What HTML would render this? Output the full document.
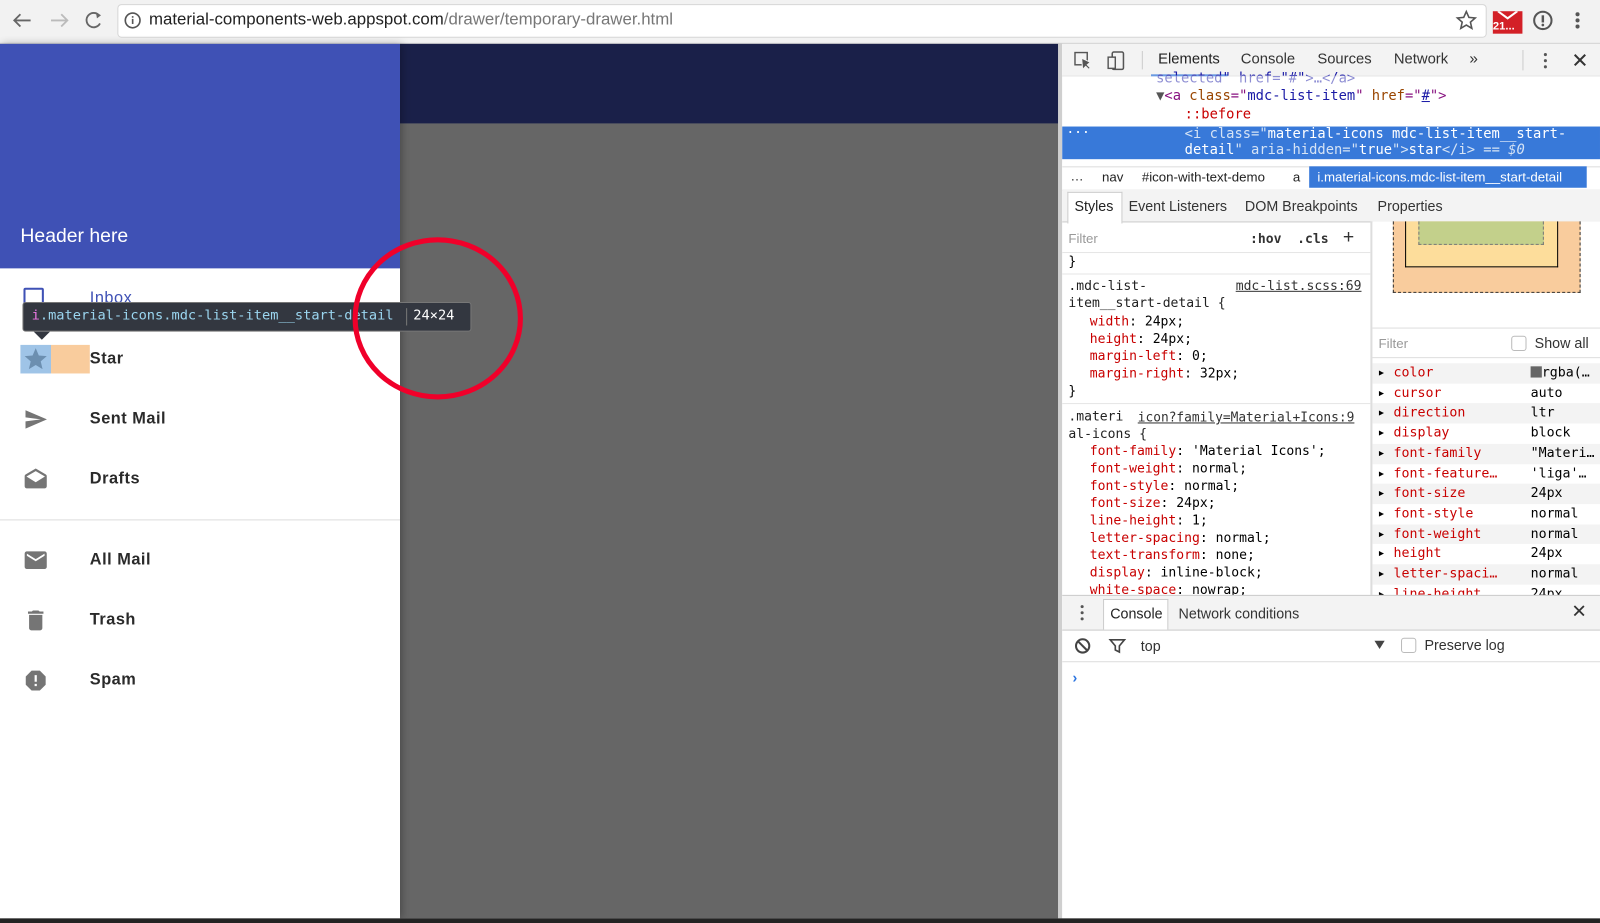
<!DOCTYPE html>
<html><head><meta charset="utf-8">
<style>
html,body{margin:0;padding:0;width:1600px;height:923px;overflow:hidden;background:#222;}
#w{position:absolute;left:0;top:0;width:1568px;height:905px;transform:scale(1.0204);transform-origin:0 0;font-family:"Liberation Sans",sans-serif;background:#fff;overflow:hidden;}
.a{position:absolute;}
.mono{font-family:"DejaVu Sans Mono","Liberation Mono",monospace;}
.t{font-size:13px;color:#222;white-space:nowrap;}
.code{font-family:"DejaVu Sans Mono","Liberation Mono",monospace;font-size:12.8px;white-space:nowrap;line-height:17px;}
.p{color:#c80000}
.item{position:absolute;left:88px;font-size:16px;font-weight:bold;color:#2a2a2a;letter-spacing:0.5px;}
.ic{position:absolute;left:22px;}
</style></head><body>
<div id="w">
<!-- browser chrome -->
<div class="a" style="left:0;top:0;width:1568px;height:42px;background:#f2f2f2;border-bottom:1px solid #ccc;"></div>
<svg class="a" style="left:10px;top:9px" width="100" height="22" viewBox="0 0 100 22">
<path d="M20 11H4M10 5L4 11L10 17" stroke="#666" stroke-width="1.8" fill="none"/>
<path d="M40 11H56M50 5L56 11L50 17" stroke="#bbb" stroke-width="1.8" fill="none"/>
<path d="M87 6A7 7 0 1 0 88 14" stroke="#666" stroke-width="1.8" fill="none"/><path d="M84 3L89 6L85 9Z" fill="#666"/>
</svg>
<div class="a" style="left:115px;top:4px;width:1340px;height:31px;background:#fff;border:1px solid #d6d6d6;border-radius:4px;"></div>
<svg class="a" style="left:121px;top:11px" width="18" height="18"><circle cx="9" cy="9" r="7.2" stroke="#555" stroke-width="1.6" fill="none"/><rect x="8.2" y="7.5" width="1.6" height="5" fill="#555"/><rect x="8.2" y="4.8" width="1.6" height="1.6" fill="#555"/></svg>
<div class="a" style="left:146px;top:10px;font-size:16.5px;color:#222;">material-components-web.appspot.com<span style="color:#777">/drawer/temporary-drawer.html</span></div>
<svg class="a" style="left:1426px;top:9px" width="22" height="22" viewBox="0 0 24 24"><path d="M12 2.5l2.8 6.3 6.7.6-5.1 4.5 1.5 6.6L12 17l-5.9 3.5 1.5-6.6-5.1-4.5 6.7-.6z" fill="none" stroke="#555" stroke-width="1.7"/></svg>
<div class="a" style="left:1463px;top:11px;width:29px;height:22px;background:#d32027;"></div>
<svg class="a" style="left:1467px;top:11px" width="21" height="9"><path d="M1 0L10.5 7L20 0" stroke="#fff" stroke-width="2" fill="none"/></svg>
<div class="a" style="left:1463px;top:20px;font-size:11px;font-weight:bold;color:#fff;">21...</div>
<svg class="a" style="left:1501px;top:9px" width="22" height="22"><circle cx="11" cy="11" r="8.5" stroke="#555" stroke-width="2" fill="none"/><rect x="9.8" y="6" width="2.4" height="7" fill="#555"/><circle cx="11" cy="15.5" r="1.3" fill="#555"/></svg>
<div class="a" style="left:1544px;top:12px;width:4px;height:4px;border-radius:2px;background:#555;box-shadow:0 6px 0 #555,0 12px 0 #555;"></div>

<!-- page -->
<div class="a" style="left:392px;top:43px;width:645px;height:78px;background:#1a2049;"></div>
<div class="a" style="left:392px;top:121px;width:645px;height:779px;background:#666;"></div>
<div class="a" style="left:0;top:43px;width:392px;height:857px;background:#fff;box-shadow:2px 0 8px rgba(0,0,0,.3);"></div>
<div class="a" style="left:0;top:43px;width:392px;height:220px;background:#3f51b5;"></div>
<div class="a" style="left:20px;top:221px;font-size:19px;color:#fff;">Header here</div>

<!-- list -->
<div class="a" style="left:23px;top:282px;width:20px;height:22px;border:2.5px solid #3f51b5;border-radius:2px;box-sizing:border-box;"></div>
<div class="item" style="top:284px;color:#3f51b5;font-weight:normal;">Inbox</div>
<div class="a" style="left:20px;top:338px;width:30px;height:28px;background:#9fc4e7;"></div>
<div class="a" style="left:50px;top:338px;width:38px;height:28px;background:#f9cc9d;"></div>
<svg class="a" style="left:22px;top:339px" width="26" height="26" viewBox="0 0 24 24"><path d="M12 17.27L18.18 21l-1.64-7.03L22 9.24l-7.19-.61L12 2 9.19 8.63 2 9.24l5.46 4.73L5.82 21z" fill="#6c8fb0"/></svg>
<div class="item" style="top:343px;">Star</div>
<svg class="ic" style="top:399px" width="26" height="24" viewBox="0 0 24 24"><path d="M2.01 21L23 12 2.01 3 2 10l15 2-15 2z" fill="#757575"/></svg>
<div class="item" style="top:402px;">Sent Mail</div>
<svg class="ic" style="top:457px" width="26" height="26" viewBox="0 0 24 24"><path d="M22 8.98V18c0 1.1-.9 2-2 2H4c-1.1 0-2-.9-2-2V8.98c0-.73.39-1.36.97-1.71L12 2l9.03 5.27c.58.35.97.98.97 1.71zM3.65 9.23L12 14.4l8.35-5.17L12 4.32z" fill="#757575"/></svg>
<div class="item" style="top:461px;">Drafts</div>
<div class="a" style="left:0;top:509px;width:392px;height:1px;background:#ddd;"></div>
<svg class="ic" style="top:536px" width="26" height="26" viewBox="0 0 24 24"><path d="M20 4H4c-1.1 0-2 .9-2 2v12c0 1.1.9 2 2 2h16c1.1 0 2-.9 2-2V6c0-1.1-.9-2-2-2zm0 4l-8 5-8-5V6l8 5 8-5z" fill="#757575"/></svg>
<div class="item" style="top:540px;">All Mail</div>
<svg class="ic" style="top:595px" width="26" height="26" viewBox="0 0 24 24"><path d="M6 19c0 1.1.9 2 2 2h8c1.1 0 2-.9 2-2V7H6v12zM19 4h-3.5l-1-1h-5l-1 1H5v2h14V4z" fill="#757575"/></svg>
<div class="item" style="top:599px;">Trash</div>
<svg class="ic" style="top:654px" width="26" height="26" viewBox="0 0 24 24"><path d="M15.73 3H8.27L3 8.27v7.46L8.27 21h7.46L21 15.73V8.27L15.73 3zM13 17h-2v-2h2v2zm0-4h-2V7h2v6z" fill="#757575"/></svg>
<div class="item" style="top:658px;">Spam</div>

<!-- tooltip -->
<div class="a" style="left:22px;top:296px;width:440px;height:29px;background:#333740;border:1px solid #777;border-radius:3px;box-sizing:border-box;"></div>
<div class="a" style="left:33px;top:325px;width:0;height:0;border-left:8px solid transparent;border-right:8px solid transparent;border-top:8px solid #333740;"></div>
<div class="a mono" style="left:31px;top:302px;font-size:13.4px;color:#9bd6f0;white-space:nowrap;"><span style="color:#ee78e6">i</span>.material-icons.mdc-list-item__start-detail</div>
<div class="a" style="left:398px;top:302px;width:1px;height:17px;background:#777;"></div>
<div class="a mono" style="left:405px;top:302px;font-size:13.4px;color:#fff;">24×24</div>

<!-- red circle -->
<svg class="a" style="left:340px;top:225px" width="180" height="175"><ellipse cx="89" cy="87" rx="81" ry="77" fill="none" stroke="#f0002a" stroke-width="5"/></svg>

<!-- devtools -->
<div class="a" style="left:1037px;top:43px;width:4px;height:857px;background:#cfcfcf;"></div>
<div class="a" style="left:1041px;top:43px;width:527px;height:857px;background:#fff;"></div>
<div class="a" style="left:1041px;top:43px;width:527px;height:31px;background:#f3f3f3;border-bottom:1px solid #ccc;"></div>
<svg class="a" style="left:1052px;top:50px" width="60" height="20"><rect x="1.5" y="1.5" width="12" height="12" stroke="#555" stroke-width="1.4" fill="none"/><path d="M8 7L9 18L12 15L15 18L16.5 16.5L13.5 13.5L16.5 11Z" fill="#555" stroke="#f3f3f3" stroke-width="1"/><rect x="38" y="1" width="11" height="17" rx="1.5" stroke="#555" stroke-width="1.5" fill="none"/><rect x="34" y="6" width="7" height="11" stroke="#555" stroke-width="1.4" fill="#f3f3f3"/></svg>
<div class="a" style="left:1119px;top:50px;width:1px;height:18px;background:#ccc;"></div>
<div class="a t" style="left:1135px;top:50px;font-size:14.5px;">Elements</div>
<div class="a" style="left:1128px;top:73px;width:75px;height:2px;background:#3879d9;"></div>
<div class="a t" style="left:1216px;top:50px;font-size:14.5px;color:#333;">Console</div>
<div class="a t" style="left:1291px;top:50px;font-size:14.5px;color:#333;">Sources</div>
<div class="a t" style="left:1366px;top:50px;font-size:14.5px;color:#333;">Network</div>
<div class="a t" style="left:1440px;top:49px;font-size:15px;color:#333;">»</div>
<div class="a" style="left:1492px;top:49px;width:1px;height:20px;background:#ccc;"></div>
<div class="a" style="left:1513px;top:52px;width:3px;height:3px;border-radius:2px;background:#555;box-shadow:0 6px 0 #555,0 12px 0 #555;"></div>
<div class="a" style="left:1540px;top:47px;font-size:20px;color:#333;">✕</div>

<!-- elements tree -->
<div class="a code" style="left:1133px;top:69px;color:#1a1aa6;font-size:13.5px;">selected" href="#"&gt;…&lt;/a&gt;</div>
<div class="a" style="left:1041px;top:74px;width:527px;height:8px;background:#fff;opacity:.5"></div>
<div class="a code" style="left:1133px;top:86px;font-size:13.5px;"><span style="color:#555">▼</span><span style="color:#881280">&lt;a </span><span style="color:#994500">class</span><span style="color:#881280">="</span><span style="color:#1a1aa6">mdc-list-item</span><span style="color:#881280">" </span><span style="color:#994500">href</span><span style="color:#881280">="</span><span style="color:#1a1aa6;text-decoration:underline">#</span><span style="color:#881280">"&gt;</span></div>
<div class="a code" style="left:1161px;top:104px;color:#c80000;font-size:13.5px;">::before</div>
<div class="a" style="left:1041px;top:124px;width:527px;height:32px;background:#3879d9;"></div>
<div class="a code" style="left:1045px;top:122px;color:#fff;">···</div>
<div class="a code" style="left:1161px;top:123px;color:#fff;line-height:16px;font-size:13.5px;"><span style="color:#d5e3f5">&lt;i class="</span>material-icons mdc-list-item__start-<br>detail<span style="color:#d5e3f5">" aria-hidden="</span>true<span style="color:#d5e3f5">"&gt;</span>star<span style="color:#d5e3f5">&lt;/i&gt; == <i>$0</i></span></div>
<div class="a" style="left:1041px;top:160px;width:527px;height:3px;background:#fff;"></div>
<!-- breadcrumbs -->
<div class="a" style="left:1041px;top:163px;width:527px;height:22px;background:#fff;border-top:1px solid #ddd;border-bottom:1px solid #ccc;"></div>
<div class="a t" style="left:1049px;top:165px;">…</div>
<div class="a t" style="left:1080px;top:166px;">nav</div>
<div class="a t" style="left:1119px;top:166px;">#icon-with-text-demo</div>
<div class="a t" style="left:1267px;top:166px;">a</div>
<div class="a" style="left:1283px;top:163px;width:272px;height:21px;background:#3879d9;"></div>
<div class="a t" style="left:1291px;top:166px;color:#fff;">i.material-icons.mdc-list-item__start-detail</div>
<!-- styles tabs -->
<div class="a" style="left:1041px;top:186px;width:527px;height:31px;background:#f3f3f3;border-bottom:1px solid #ccc;"></div>
<div class="a" style="left:1046px;top:188px;width:52px;height:30px;background:#fff;border:1px solid #ccc;border-bottom:none;"></div>
<div class="a t" style="left:1053px;top:194px;font-size:14px;">Styles</div>
<div class="a t" style="left:1106px;top:194px;font-size:14px;color:#333;">Event Listeners</div>
<div class="a t" style="left:1220px;top:194px;font-size:14px;color:#333;">DOM Breakpoints</div>
<div class="a t" style="left:1350px;top:194px;font-size:14px;color:#333;">Properties</div>
<!-- styles left -->
<div class="a" style="left:1343px;top:217px;width:2px;height:367px;background:#ddd;"></div>
<div class="a t" style="left:1047px;top:226px;color:#999;">Filter</div>
<div class="a code" style="left:1225px;top:226px;font-weight:bold;color:#333;">:hov &nbsp;.cls</div>
<div class="a t" style="left:1316px;top:222px;font-size:19px;color:#333;">+</div>
<div class="a" style="left:1041px;top:247px;width:302px;height:1px;background:#e6e6e6;"></div>
<div class="a code" style="left:1047px;top:248px;">}</div>
<div class="a" style="left:1041px;top:268px;width:302px;height:1px;background:#e6e6e6;"></div>
<div class="a code" style="left:1047px;top:272px;color:#222;">.mdc-list-<br>item__start-detail {</div>
<div class="a code" style="left:1211px;top:272px;color:#333;text-decoration:underline;">mdc-list.scss:69</div>
<div class="a code" style="left:1068px;top:307px;"><span class="p">width</span>: 24px;<br><span class="p">height</span>: 24px;<br><span class="p">margin-left</span>: 0;<br><span class="p">margin-right</span>: 32px;</div>
<div class="a code" style="left:1047px;top:375px;">}</div>
<div class="a" style="left:1041px;top:395px;width:302px;height:1px;background:#e6e6e6;"></div>
<div class="a code" style="left:1047px;top:400px;color:#222;">.materi<br>al-icons {</div>
<div class="a code" style="left:1115px;top:400px;color:#333;text-decoration:underline;font-size:12.6px;">icon?family=Material+Icons:9</div>
<div class="a code" style="left:1068px;top:434px;"><span class="p">font-family</span>: 'Material Icons';<br><span class="p">font-weight</span>: normal;<br><span class="p">font-style</span>: normal;<br><span class="p">font-size</span>: 24px;<br><span class="p">line-height</span>: 1;<br><span class="p">letter-spacing</span>: normal;<br><span class="p">text-transform</span>: none;<br><span class="p">display</span>: inline-block;<br><span class="p">white-space</span>: nowrap;</div>
<!-- box model -->
<div class="a" style="left:1345px;top:217px;width:223px;height:105px;background:#fff;"></div>
<div class="a" style="left:1365px;top:217px;width:182px;height:69px;background:#f9cc9d;border:1px dashed #333;border-top:none;"></div>
<div class="a" style="left:1377px;top:217px;width:148px;height:44px;background:#fddd9b;border:1px solid #000;border-top:none;"></div>
<div class="a" style="left:1390px;top:217px;width:121px;height:22px;background:#c3d08b;border:1px dashed #777;border-top:none;"></div>
<div class="a" style="left:1345px;top:321px;width:223px;height:1px;background:#ddd;"></div>
<div class="a t" style="left:1351px;top:329px;color:#999;">Filter</div>
<div class="a" style="left:1481px;top:329px;width:13px;height:13px;border:1px solid #bbb;border-radius:3px;"></div>
<div class="a t" style="left:1504px;top:328px;font-size:14px;color:#333;">Show all</div>
<div class="a" style="left:1345px;top:350px;width:223px;height:1px;background:#ddd;"></div>
<div class="a code" style="left:1345px;top:356px;width:223px;line-height:19.7px;font-size:13px;">
<div style="background:#f3f3f3;padding-left:5px">▸ <span class="p">color</span><span style="position:absolute;left:155px"><span style="display:inline-block;width:11px;height:11px;background:#666;vertical-align:-1px"></span>rgba(…</span></div>
<div style="padding-left:5px">▸ <span class="p">cursor</span><span style="position:absolute;left:155px">auto</span></div>
<div style="background:#f3f3f3;padding-left:5px">▸ <span class="p">direction</span><span style="position:absolute;left:155px">ltr</span></div>
<div style="padding-left:5px">▸ <span class="p">display</span><span style="position:absolute;left:155px">block</span></div>
<div style="background:#f3f3f3;padding-left:5px">▸ <span class="p">font-family</span><span style="position:absolute;left:155px">"Materi…</span></div>
<div style="padding-left:5px">▸ <span class="p">font-feature…</span><span style="position:absolute;left:155px">'liga'…</span></div>
<div style="background:#f3f3f3;padding-left:5px">▸ <span class="p">font-size</span><span style="position:absolute;left:155px">24px</span></div>
<div style="padding-left:5px">▸ <span class="p">font-style</span><span style="position:absolute;left:155px">normal</span></div>
<div style="background:#f3f3f3;padding-left:5px">▸ <span class="p">font-weight</span><span style="position:absolute;left:155px">normal</span></div>
<div style="padding-left:5px">▸ <span class="p">height</span><span style="position:absolute;left:155px">24px</span></div>
<div style="background:#f3f3f3;padding-left:5px">▸ <span class="p">letter-spaci…</span><span style="position:absolute;left:155px">normal</span></div>
<div style="padding-left:5px">▸ <span class="p">line-height</span><span style="position:absolute;left:155px">24px</span></div>
</div>
<!-- console drawer -->
<div class="a" style="left:1041px;top:583px;width:527px;height:33px;background:#f3f3f3;border-top:1px solid #ccc;border-bottom:1px solid #ccc;"></div>
<div class="a" style="left:1059px;top:593px;width:3px;height:3px;border-radius:2px;background:#555;box-shadow:0 6px 0 #555,0 12px 0 #555;"></div>
<div class="a" style="left:1081px;top:587px;width:62px;height:29px;background:#fff;border:1px solid #ccc;border-bottom:none;"></div>
<div class="a t" style="left:1088px;top:593px;font-size:14px;">Console</div>
<div class="a t" style="left:1155px;top:593px;font-size:14px;color:#333;">Network conditions</div>
<div class="a" style="left:1540px;top:589px;font-size:18px;color:#333;">✕</div>
<svg class="a" style="left:1053px;top:624px" width="60" height="18"><circle cx="8" cy="9" r="6.5" stroke="#444" stroke-width="2" fill="none"/><path d="M3.5 4.5L12.5 13.5" stroke="#444" stroke-width="2"/><path d="M35 3H49L44 9V15L40 13V9Z" stroke="#444" stroke-width="1.6" fill="none"/></svg>
<div class="a t" style="left:1118px;top:625px;font-size:14px;color:#333;">top</div>
<div class="a" style="left:1347px;top:628px;width:0;height:0;border-top:8px solid #444;border-left:5px solid transparent;border-right:5px solid transparent;"></div>
<div class="a" style="left:1373px;top:625px;width:13px;height:13px;border:1px solid #bbb;border-radius:3px;"></div>
<div class="a t" style="left:1396px;top:624px;font-size:14px;color:#333;">Preserve log</div>
<div class="a" style="left:1041px;top:648px;width:527px;height:1px;background:#ddd;"></div>
<div class="a" style="left:1051px;top:656px;font-size:14px;color:#2a74e0;font-weight:bold;">›</div>

<div class="a" style="left:0;top:900px;width:1568px;height:5px;background:#232323;"></div>
</div>
</body></html>
